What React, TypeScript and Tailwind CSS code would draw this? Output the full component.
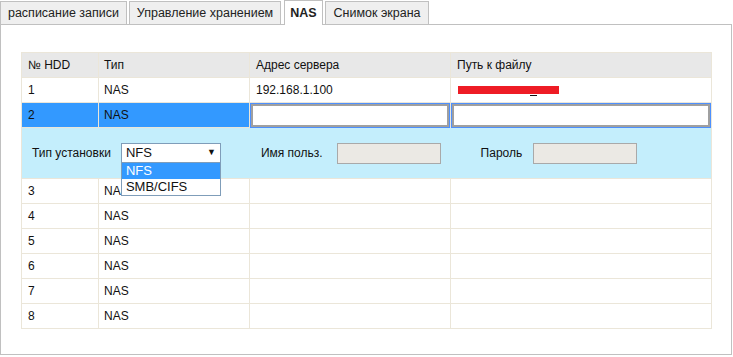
import React from "react";

const font = { fontFamily: '"Liberation Sans", Arial, sans-serif' };

function Tab({ label, active, w }: { label: string; active?: boolean; w: string }) {
  if (active) {
    return (
      <div className={`${w} h-[25px] -mb-px relative z-10 border border-b-0 border-[#c0c0c0] bg-white flex items-center justify-center text-[12.5px] font-bold text-[#222]`}>
        {label}
      </div>
    );
  }
  return (
    <div className={`${w} h-[23px] mt-[1px] border border-b-0 border-[#c0c0c0] bg-[#efefef] flex items-center justify-center text-[12.5px] text-[#222]`}>
      {label}
    </div>
  );
}

const rows = [3, 4, 5, 6, 7, 8];

export default function App() {
  return (
    <div className="w-[733px] h-[357px] bg-white text-[12px] text-[#111]" style={font}>
      <div className="flex items-end h-[24px]">
        <Tab label="расписание записи" w="w-[127px]" />
        <div className="w-[2px]" />
        <Tab label="Управление хранением" w="w-[152px]" />
        <div className="w-[3px]" />
        <Tab label="NAS" active w="w-[39px]" />
        <div className="w-[2px]" />
        <Tab label="Снимок экрана" w="w-[104px]" />
      </div>
      <div className="w-[732px] h-[331px] border border-[#c0c0c0] pt-[27px] pl-[20px]">
        <table className="w-[690px] border-collapse table-fixed">
          <colgroup>
            <col className="w-[77px]" />
            <col className="w-[151px]" />
            <col className="w-[201px]" />
            <col className="w-[261px]" />
          </colgroup>
          <tbody>
            <tr className="h-[25px] bg-[#e8e8e8]">
              <td className="border border-[#ebe6d9] pl-[6px]">№ HDD</td>
              <td className="border border-[#ebe6d9] pl-[5px]">Тип</td>
              <td className="border border-[#ebe6d9] pl-[6px]">Адрес сервера</td>
              <td className="border border-[#ebe6d9] pl-[6px]">Путь к файлу</td>
            </tr>
            <tr className="h-[25px]">
              <td className="border border-[#ebe6d9] pl-[6px]">1</td>
              <td className="border border-[#ebe6d9] pl-[5px]">NAS</td>
              <td className="border border-[#ebe6d9] pl-[6px]">192.168.1.100</td>
              <td className="border border-[#ebe6d9] pl-[6px]">
                <div className="relative h-[14px]">
                  <div className="absolute left-[1px] top-[3px] w-[101px] h-[8px] bg-[#ee1c25]" />
                  <div className="absolute left-[73px] top-[12px] w-[7px] h-[1px] bg-[#111]" />
                </div>
              </td>
            </tr>
            <tr className="h-[25px] bg-[#3399ff]">
              <td className="border border-[#ebe6d9] pl-[6px]">2</td>
              <td className="border border-[#ebe6d9] pl-[5px]">NAS</td>
              <td className="border border-[#ebe6d9] p-0">
                <div className="mx-[1px] h-[23px] bg-white border-2 border-[#a0a0a0] outline outline-1 outline-[#4d90fe]" />
              </td>
              <td className="border border-[#ebe6d9] p-0">
                <div className="mx-[1px] h-[23px] bg-white border-2 border-[#a0a0a0] outline outline-1 outline-[#4d90fe]" />
              </td>
            </tr>
            <tr className="h-[51px] bg-[#c4eefc]">
              <td colSpan={4} className="border border-[#ebe6d9] p-0">
                <div className="flex items-center h-[49px]">
                  <span className="ml-[10px] text-[12px]">Тип установки</span>
                  <div className="relative ml-[10px]">
                    <div className="w-[100px] h-[20px] bg-white border border-[#7f9db9] flex items-center justify-between pl-[4px] pr-[4px] text-[13px]">
                      <span>NFS</span>
                      <span className="text-[9px]">▼</span>
                    </div>
                    <div className="absolute left-0 top-[20px] w-[100px] bg-white border border-[#7f9db9] border-t-0 text-[13px] z-20">
                      <div className="h-[16px] bg-[#3399ff] text-white pl-[4px] leading-[16px]">NFS</div>
                      <div className="h-[16px] pl-[4px] leading-[16px]">SMB/CIFS</div>
                    </div>
                  </div>
                  <span className="ml-[40px]">Имя польз.</span>
                  <div className="ml-[14px] w-[104px] h-[21px] bg-[#ebe9e4] border border-[#a9a9a9]" />
                  <span className="ml-[40px]">Пароль</span>
                  <div className="ml-[11px] w-[104px] h-[21px] bg-[#ebe9e4] border border-[#a9a9a9]" />
                </div>
              </td>
            </tr>
            {rows.map((n) => (
              <tr key={n} className="h-[25px]">
                <td className="border border-[#ebe6d9] pl-[6px]">{n}</td>
                <td className="border border-[#ebe6d9] pl-[5px]">NAS</td>
                <td className="border border-[#ebe6d9]"></td>
                <td className="border border-[#ebe6d9]"></td>
              </tr>
            ))}
          </tbody>
        </table>
      </div>
    </div>
  );
}
